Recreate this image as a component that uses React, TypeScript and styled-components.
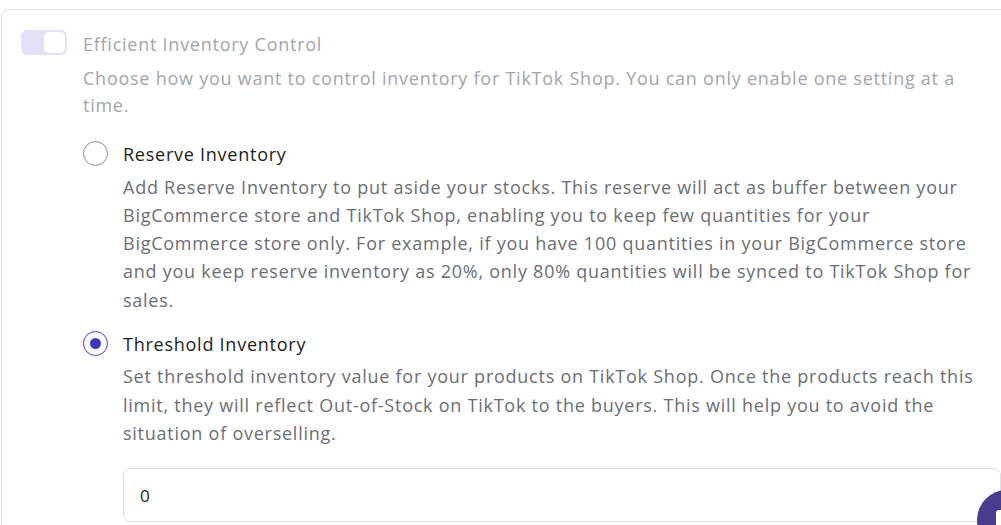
import styled, { createGlobalStyle } from "styled-components";

const GlobalStyle = createGlobalStyle`
  html, body {
    margin: 0;
    padding: 0;
    background: #ffffff;
    overflow: hidden;
  }
  body {
    font-family: "Open Sans", Lato, sans-serif;
    letter-spacing: 0.75px;
  }
`

const Page = styled.div`
  width: 1001px;
  height: 525px;
  position: relative;
  overflow: hidden;
  padding: 9px 0 0 1px;
  box-sizing: border-box;
`

const Card = styled.section`
  width: 1040px;
  border: 1px solid #e2e2e2;
  border-radius: 8px;
  padding: 20px 0 30px 19px;
  box-sizing: border-box;
  display: flex;
  gap: 16px;
`

const Toggle = styled.div<{ on?: boolean }>`
  flex: none;
  width: 46px;
  height: 25px;
  border-radius: 6px;
  background: #e4e0f6;
  padding: 2px;
  box-sizing: border-box;
  display: flex;
  justify-content: ${p => p.on ? 'flex-end' : 'flex-start'};
`

const Knob = styled.span`
  width: 21px;
  height: 21px;
  border-radius: 5px;
  background: #ffffff;
`

const Content = styled.div`
  flex: 1;
  display: flex;
  flex-direction: column;
`

const Title = styled.h3`
  margin: 3px 0 0;
  font-size: 18px;
  font-weight: 400;
  line-height: 22px;
  color: #a2a5ac;
`

const Description = styled.p`
  margin: 10px 0 0;
  width: 895px;
  font-size: 18px;
  line-height: 27px;
  color: #a2a5ac;
`

const Options = styled.div`
  margin-top: 21px;
  display: flex;
  flex-direction: column;
  gap: 16px;
`

const Option = styled.div`
  display: flex;
  gap: 15px;
`

const Radio = styled.span<{ checked?: boolean }>`
  flex: none;
  width: 25px;
  height: 25px;
  margin-top: 1px;
  border-radius: 50%;
  box-sizing: border-box;
  border: 1.5px solid ${p => p.checked ? '#4b41c0' : '#8e9096'};
  display: flex;
  align-items: center;
  justify-content: center;
  &::after {
    content: '';
    display: ${p => p.checked ? 'block' : 'none'};
    width: 11px;
    height: 11px;
    border-radius: 50%;
    background: #3f37b9;
  }
`

const OptionBody = styled.div`
  flex: 1;
  display: flex;
  flex-direction: column;
`

const OptionLabel = styled.div`
  font-size: 18px;
  line-height: 28px;
  color: #1c1d22;
`

const OptionText = styled.p`
  margin: 4.5px 0 0;
  width: 870px;
  font-size: 18px;
  line-height: 28.3px;
  color: #6b6e76;
`

const Input = styled.input`
  margin-top: 21px;
  height: 54px;
  width: 878px;
  box-sizing: border-box;
  border: 1px solid #e0e0e0;
  border-radius: 7px;
  padding: 0 16px;
  font-family: "Open Sans", sans-serif;
  font-size: 17px;
  color: #1c1d22;
  outline: none;
`

const ChatButton = styled.div`
  position: absolute;
  left: 977px;
  top: 490px;
  width: 60px;
  height: 60px;
  border-radius: 50%;
  background: #4b3b8e;
  &::after {
    content: '';
    position: absolute;
    left: 19px;
    top: 20px;
    width: 14px;
    height: 20px;
    border-radius: 3px 0 0 0;
    background: #ffffff;
  }
`

export default function App() {
  return (
    <Page>
      <GlobalStyle />
      <Card>
        <Toggle on><Knob /></Toggle>
        <Content>
          <Title>Efficient Inventory Control</Title>
          <Description>
            Choose how you want to control inventory for TikTok Shop. You can only enable one setting at a time.
          </Description>
          <Options>
            <Option>
              <Radio />
              <OptionBody>
                <OptionLabel>Reserve Inventory</OptionLabel>
                <OptionText>
                  Add Reserve Inventory to put aside your stocks. This reserve will act as buffer between your BigCommerce store and TikTok Shop, enabling you to keep few quantities for your BigCommerce store only. For example, if you have 100 quantities in your BigCommerce store and you keep reserve inventory as 20%, only 80% quantities will be synced to TikTok Shop for sales.
                </OptionText>
              </OptionBody>
            </Option>
            <Option>
              <Radio checked />
              <OptionBody>
                <OptionLabel>Threshold Inventory</OptionLabel>
                <OptionText>
                  Set threshold inventory value for your products on TikTok Shop. Once the products reach this limit, they will reflect Out-of-Stock on TikTok to the buyers. This will help you to avoid the situation of overselling.
                </OptionText>
                <Input defaultValue="0" />
              </OptionBody>
            </Option>
          </Options>
        </Content>
      </Card>
      <ChatButton />
    </Page>
  )
}
